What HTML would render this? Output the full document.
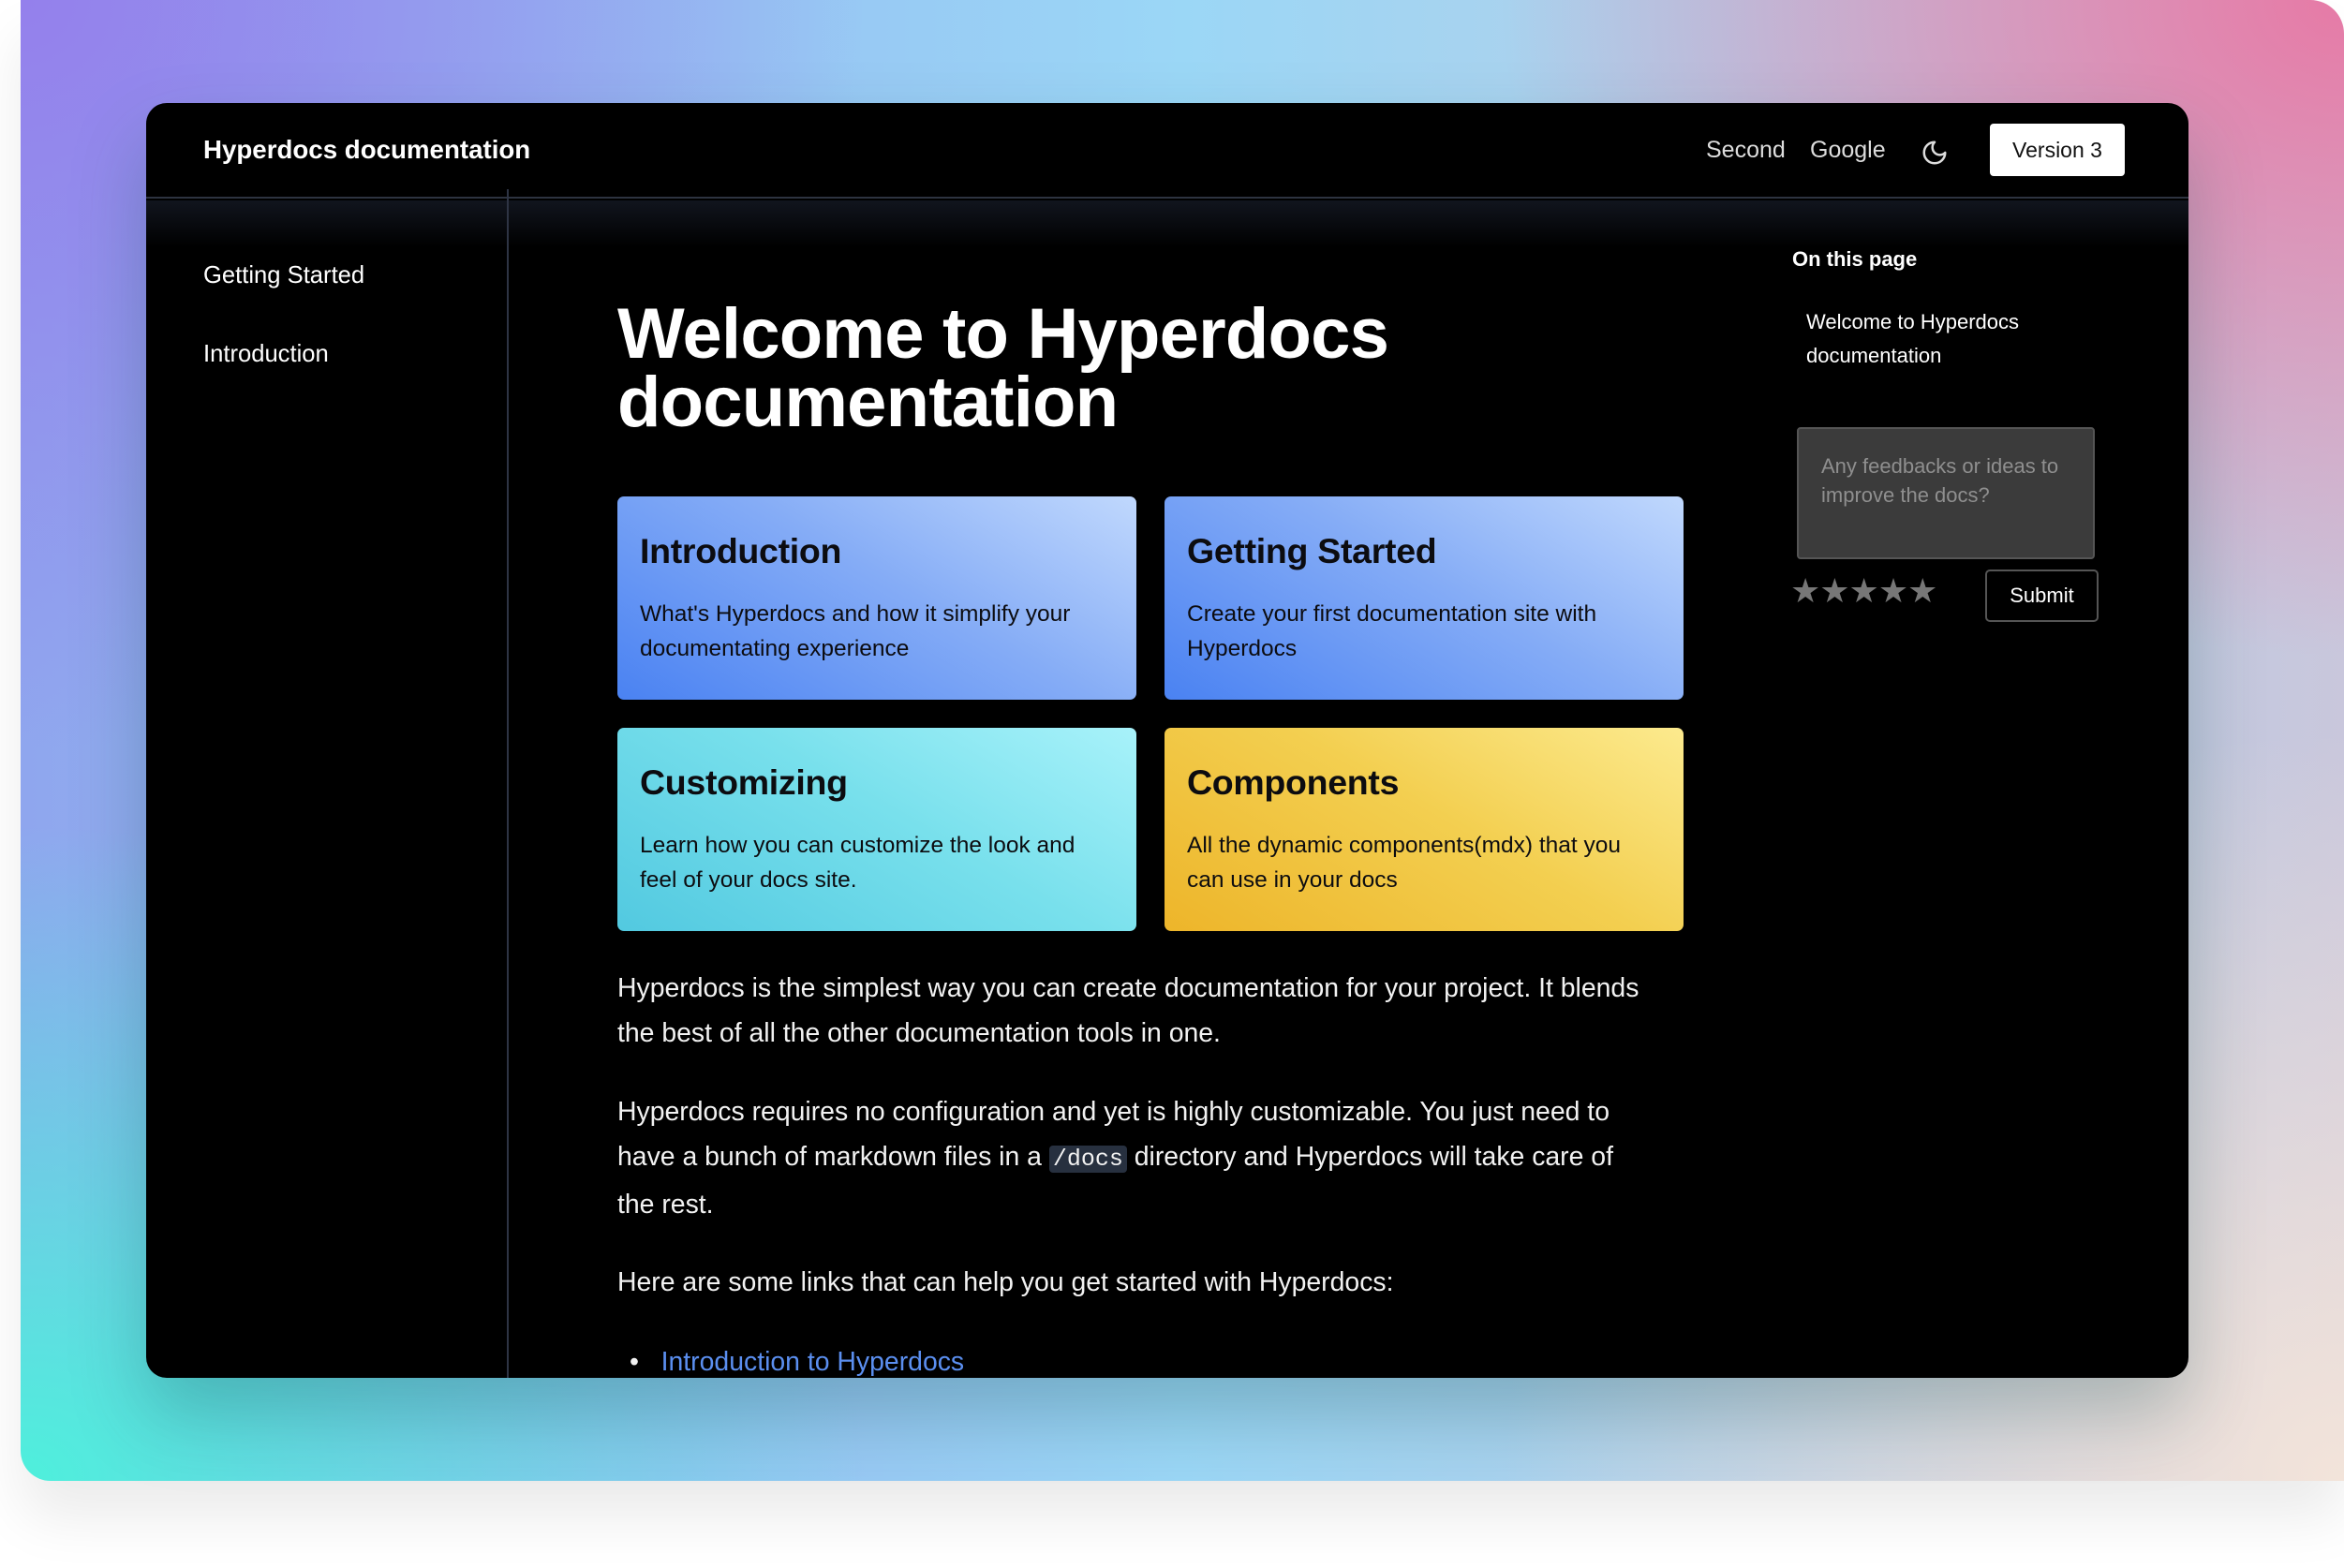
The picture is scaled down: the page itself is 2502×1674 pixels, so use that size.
<!DOCTYPE html>
<html><head><meta charset="utf-8"><style>
*{margin:0;padding:0;box-sizing:border-box}
body{width:2502px;height:1674px;background:#fff;position:relative;overflow:hidden;font-family:"Liberation Sans",sans-serif}
.bg{position:absolute;left:22px;top:0;width:2480px;height:1581px;border-radius:0 36px 0 32px;
background:
radial-gradient(ellipse 900px 700px at 0% 100%,#4ef0dc 0%,rgba(78,240,220,0) 100%),
radial-gradient(ellipse 900px 700px at 100% 0%,#e67aa6 0%,rgba(230,122,166,0) 100%),
radial-gradient(ellipse 900px 800px at 100% 100%,#f3e4da 0%,rgba(243,228,218,0) 100%),
radial-gradient(ellipse 900px 800px at 0% 0%,#9480ec 0%,rgba(148,128,236,0) 100%),
linear-gradient(90deg,#8fa6ee 0%,#9bd7f6 50%,#c9c7dc 100%);
box-shadow:0 40px 60px rgba(0,0,0,0.08)}
.win{position:absolute;left:156px;top:110px;width:2180px;height:1361px;background:#000;border-radius:22px;overflow:hidden;color:#fff;box-shadow:0 40px 80px rgba(0,60,60,0.25)}
.hdr{position:absolute;left:0;top:0;width:100%;height:102px;border-bottom:2px solid #2d3340}
.glow{position:absolute;left:0;top:104px;width:100%;height:50px;background:linear-gradient(#11151e,#000)}
.brand{position:absolute;left:61px;top:34px;font-size:27.7px;font-weight:bold}
.nav{position:absolute;top:36px;font-size:25px;color:#ddd}
.ver{position:absolute;left:1968px;top:22px;width:144px;height:56px;background:#fff;color:#111;border-radius:4px;font-size:23px;text-align:center;line-height:56px}
.side{position:absolute;left:385px;top:92px;width:2px;height:1300px;background:#2e3444}
.sl{position:absolute;left:61px;font-size:25.6px}
h1{position:absolute;left:503px;top:210px;font-size:76px;line-height:73px;font-weight:bold;letter-spacing:-0.8px}
.card{position:absolute;width:554px;height:217px;border-radius:7px;color:#0c0c10;padding:37px 24px}
.card h2{font-size:37.5px;font-weight:bold;margin-bottom:27px;letter-spacing:-0.3px}
.card p{font-size:24.5px;line-height:37px}
.c1{background:linear-gradient(30deg,#4a82f2 0%,#85acf6 55%,#c0d8fd 100%)}
.c3{background:linear-gradient(30deg,#52c9e0 0%,#78e0ec 55%,#a8f2fa 100%)}
.c4{background:linear-gradient(30deg,#edb52a 0%,#f3cf50 55%,#fcea8e 100%)}
.p{position:absolute;left:503px;font-size:28.4px;line-height:48px;white-space:nowrap;color:#f2f2f2}
code{font-family:"Liberation Mono",monospace;background:#27303f;border-radius:4px;padding:0 4px;font-size:25px}
.toc{position:absolute;left:1757px;font-size:22px}
.ta{position:absolute;left:1762px;top:346px;width:318px;height:141px;background:#3b3b3b;border:2px solid #555;border-radius:4px;color:#8f8f8f;font-size:22px;line-height:31px;padding:24px 24px}
.stars{position:absolute;left:1755px;top:500px;font-size:36px;color:#777;letter-spacing:-1px}
.sub{position:absolute;left:1963px;top:498px;width:121px;height:56px;border:2px solid #555;border-radius:5px;font-size:22px;text-align:center;line-height:52px}
</style></head><body>
<div class="bg"></div>
<div class="win">
<div class="glow"></div>
<div class="hdr"></div>
<div class="brand">Hyperdocs documentation</div>
<div class="nav" style="left:1665px">Second</div>
<div class="nav" style="left:1776px">Google</div>
<svg style="position:absolute;left:1894px;top:38px" width="30" height="30" viewBox="0 0 24 24" fill="none" stroke="#ddd" stroke-width="2" stroke-linecap="round" stroke-linejoin="round"><path d="M12 3a6 6 0 0 0 9 9 9 9 0 1 1-9-9z"/></svg>
<div class="ver">Version 3</div>
<div class="side"></div>
<div class="sl" style="top:170px">Getting Started</div>
<div class="sl" style="top:254px">Introduction</div>
<h1>Welcome to Hyperdocs<br>documentation</h1>
<div class="card c1" style="left:503px;top:420px"><h2>Introduction</h2><p>What's Hyperdocs and how it simplify your<br>documentating experience</p></div>
<div class="card c1" style="left:1087px;top:420px"><h2>Getting Started</h2><p>Create your first documentation site with<br>Hyperdocs</p></div>
<div class="card c3" style="left:503px;top:667px"><h2>Customizing</h2><p>Learn how you can customize the look and<br>feel of your docs site.</p></div>
<div class="card c4" style="left:1087px;top:667px"><h2>Components</h2><p>All the dynamic components(mdx) that you<br>can use in your docs</p></div>
<div class="p" style="top:921px">Hyperdocs is the simplest way you can create documentation for your project. It blends<br>the best of all the other documentation tools in one.</div>
<div class="p" style="top:1053px">Hyperdocs requires no configuration and yet is highly customizable. You just need to<br>have a bunch of markdown files in a <code>/docs</code> directory and Hyperdocs will take care of<br>the rest.</div>
<div class="p" style="top:1235px">Here are some links that can help you get started with Hyperdocs:</div>
<div class="p" style="top:1320px;left:516px">•&nbsp;&nbsp;&nbsp;<span style="color:#5b8ff0">Introduction to Hyperdocs</span></div>
<div class="toc" style="top:154px;font-weight:bold">On this page</div>
<div class="toc" style="top:216px;left:1772px;line-height:36px">Welcome to Hyperdocs<br>documentation</div>
<div class="ta">Any feedbacks or ideas to<br>improve the docs?</div>
<div class="stars">★★★★★</div>
<div class="sub">Submit</div>
</div>
</body></html>
